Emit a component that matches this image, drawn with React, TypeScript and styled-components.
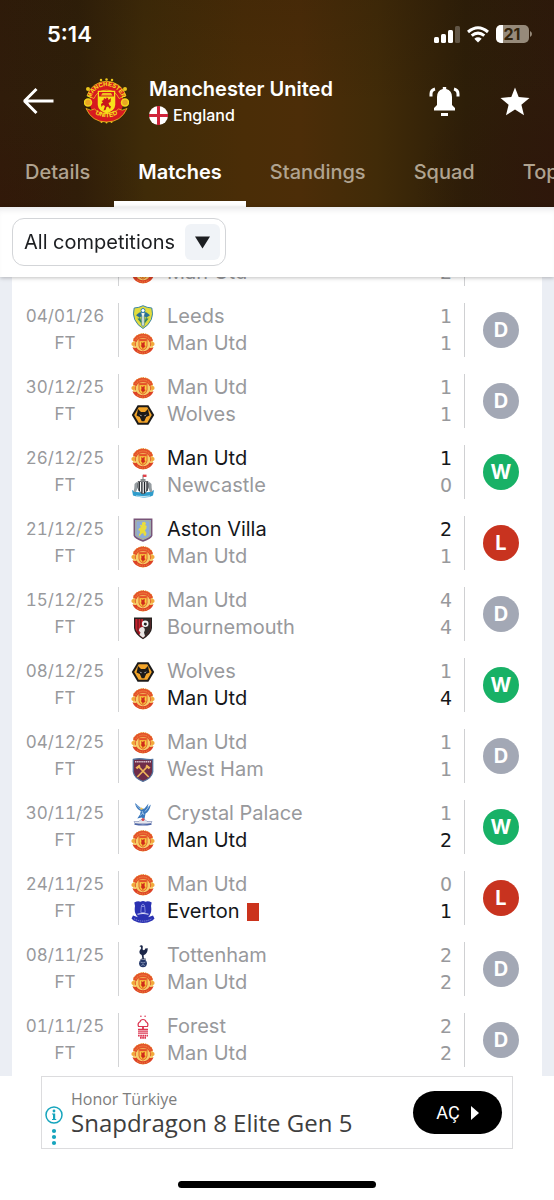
import React from "react";
import styled, { createGlobalStyle } from "styled-components";

const GlobalStyle = createGlobalStyle`
  *, *::before, *::after { box-sizing: border-box; }
  body { margin: 0; background: #fff; font-family: Inter, "Liberation Sans", sans-serif; }
  button, select { font-family: inherit; }
  h1, p, ul { margin: 0; padding: 0; }
  ul { list-style: none; }
`;

/* ---------- layout ---------- */

const Screen = styled.div`
  display: flex;
  flex-direction: column;
  height: 100vh;
  overflow: hidden;
`;

const Header = styled.header`
  flex: none;
  color: #fff;
  background:
    radial-gradient(ellipse 150px 110px at 0% 100%, rgba(52, 20, 8, 0.4), transparent),
    radial-gradient(ellipse 140px 110px at 100% 90%, rgba(46, 20, 10, 0.5), transparent),
    linear-gradient(180deg, rgba(36, 20, 8, 0.15), transparent 50%),
    linear-gradient(90deg, #301c0a 0%, #2f1f09 14%, #3f2b08 26%, #4a2d07 44%, #4c2d08 54%, #412b08 68%, #2d1e08 84%, #2e1a0b 100%);
`;

const StatusBar = styled.div`
  display: flex;
  align-items: center;
  justify-content: space-between;
  height: 68px;
  padding: 0 22px 0 47px;
`;

const Clock = styled.span`
  font-size: 22px;
  line-height: 28px;
  font-weight: 600;
`;

const StatusIcons = styled.div`
  display: flex;
  align-items: center;
  gap: 7px;
`;

const TitleRow = styled.div`
  display: flex;
  align-items: center;
  height: 68px;
  padding: 0 24px 2px 22px;
`;

const IconButton = styled.button`
  display: flex;
  padding: 0;
  border: 0;
  background: none;
  color: inherit;
  cursor: pointer;
`;

const ClubCrest = styled.div`
  display: flex;
  margin: 0 20px 0 29px;
`;

const ClubText = styled.div`
  flex: 1;
  min-width: 0;
`;

const ClubName = styled.h1`
  font-size: 20px;
  line-height: 28px;
  font-weight: 600;
  white-space: nowrap;
`;

const Country = styled.p`
  display: flex;
  align-items: center;
  gap: 5px;
  font-size: 16px;
  line-height: 24px;
  font-weight: 500;
`;

const Actions = styled.div`
  display: flex;
  align-items: center;
  gap: 40px;
`;

const Tabs = styled.nav`
  display: flex;
  height: 71px;
  padding-left: 1px;
  overflow: hidden;
`;

const Tab = styled.a<{ $active?: boolean }>`
  flex: none;
  display: flex;
  align-items: center;
  padding: 6px 24px 0;
  border-bottom: 6px solid ${(p) => (p.$active ? "#fff" : "transparent")};
  color: ${(p) => (p.$active ? "#fff" : "#b0a390")};
  font-size: 20px;
  line-height: 24px;
  font-weight: ${(p) => (p.$active ? 600 : 500)};
  text-decoration: none;
`;

const FilterBar = styled.div`
  position: relative;
  z-index: 1;
  flex: none;
  display: flex;
  align-items: center;
  height: 70px;
  padding: 0 12px;
  background: #fff;
  box-shadow: 0 1px 4px rgba(0, 0, 0, 0.25), inset 0 6px 6px -4px rgba(40, 40, 60, 0.12);
`;

const SelectBox = styled.div`
  display: grid;
  align-items: center;
  width: 214px;
  height: 48px;
  border: 1px solid #d3d5d8;
  border-radius: 12px;

  > * { grid-area: 1 / 1; }
`;

const Select = styled.select`
  appearance: none;
  width: 100%;
  height: 100%;
  padding: 0 44px 0 11px;
  border: 0;
  border-radius: 10px;
  background: transparent;
  color: #1c1e21;
  font-size: 20px;
  cursor: pointer;
`;

const SelectArrow = styled.span`
  justify-self: end;
  display: flex;
  align-items: center;
  justify-content: center;
  width: 35px;
  height: 36px;
  margin-right: 5px;
  border-radius: 6px;
  background: #f0f3f7;
  pointer-events: none;
`;

const Scroller = styled.main`
  flex: 1;
  min-height: 0;
  display: flex;
  flex-direction: column-reverse;
  overflow-y: auto;
  scrollbar-width: none;
  padding: 0 12px;
  background: #ebeef4;
`;

const MatchList = styled.ul`
  background: #fff;
`;

const Match = styled.li`
  display: flex;
  height: 71px;
  padding: 8px 0 9px;
`;

const When = styled.div`
  flex: none;
  width: 107px;
  border-right: 1px solid #d3d4d6;
  color: #98999c;
  font-size: 17px;
  line-height: 27px;
  text-align: center;
  font-variant-numeric: tabular-nums;
`;

const Teams = styled.div`
  flex: 1;
  min-width: 0;
  display: flex;
  flex-direction: column;
  justify-content: flex-end;
  padding: 0 12px;
  border-right: 1px solid #cfd0d2;
`;

const TeamLine = styled.div<{ $winner?: boolean }>`
  display: flex;
  align-items: center;
  height: 27px;
  color: ${(p) => (p.$winner ? "#15171a" : "#98999c")};
  font-size: 20px;
  line-height: 27px;
  white-space: nowrap;
`;

const TeamName = styled.span`
  margin-left: 12px;
`;

const RedCard = styled.span`
  width: 12px;
  height: 18px;
  margin-left: 7px;
  background: #cb331c;
`;

const Score = styled.span`
  margin-left: auto;
  font-family: "DejaVu Sans", sans-serif;
  font-size: 19px;
`;

const Outcome = styled.div`
  flex: none;
  display: flex;
  align-items: center;
  width: 77px;
  padding-left: 18px;
`;

const outcomeColor = { D: "#a3a8b5", W: "#18b166", L: "#c8331f" };

const Badge = styled.span<{ $kind: "D" | "W" | "L" }>`
  display: flex;
  align-items: center;
  justify-content: center;
  width: 36px;
  height: 36px;
  border-radius: 50%;
  background: ${(p) => outcomeColor[p.$kind]};
  color: #fff;
  font-size: 20px;
  line-height: 24px;
  font-weight: 700;
`;

const Footer = styled.footer`
  flex: none;
  display: flex;
  flex-direction: column;
  align-items: center;
  gap: 32px;
  padding: 0 41px 12px;
  background: #fff;
`;

const Ad = styled.aside`
  display: flex;
  align-items: center;
  width: 100%;
  height: 73px;
  padding: 0 10px 0 3px;
  border: 1px solid #dcdcde;
  font-family: "Open Sans", "Noto Sans", sans-serif;
`;

const AdMarks = styled.div`
  display: flex;
  margin-top: 26px;
`;

const AdText = styled.div`
  flex: 1;
  min-width: 0;
  padding: 0 0 4px 8px;
  line-height: 24px;
  white-space: nowrap;
`;

const Advertiser = styled.p`
  color: #7d7d7d;
  font-size: 16px;
`;

const AdTitle = styled.p`
  color: #3e3e3e;
  font-size: 24px;
`;

const AdButton = styled.button`
  display: flex;
  align-items: center;
  justify-content: center;
  gap: 11px;
  width: 89px;
  height: 43px;
  border: 0;
  border-radius: 22px;
  background: #000;
  color: #fff;
  font-family: Roboto, sans-serif;
  font-size: 18px;
  cursor: pointer;
`;

const HomeIndicator = styled.div`
  width: 198px;
  height: 7px;
  border-radius: 4px;
  background: #000;
`;

/* ---------- crests ---------- */

type Club =
  | "united" | "leeds" | "wolves" | "newcastle" | "villa" | "bournemouth"
  | "westham" | "palace" | "everton" | "spurs" | "forest";

const UnitedLarge = () => (
  <svg width="45" height="46" viewBox="0 0 90 92" role="img" aria-label="Manchester United crest">
    <defs>
      <path id="arcTop" d="M15 37A32 32 0 0 1 75 37" />
      <path id="arcBottom" d="M12 61A37 32 0 0 0 78 61" />
    </defs>
    <g fill="#e9c41c">
      <circle cx="34" cy="4" r="2.500" /><circle cx="45" cy="3" r="2.500" /><circle cx="56" cy="4" r="2.500" />
      <circle cx="8" cy="22" r="4" /><circle cx="82" cy="22" r="4" />
      <circle cx="35" cy="88" r="2" /><circle cx="45" cy="89" r="2" /><circle cx="55" cy="88" r="2" />
    </g>
    <ellipse cx="45" cy="48" rx="34" ry="32" fill="#d71a20" />
    <path d="M6 35A41 41 0 0 1 84 35L70 41A27 27 0 0 0 20 41Z" fill="#d71a20" stroke="#f0cf1e" strokeWidth="1.500" />
    <path d="M4 61Q14 67 21 62Q29 71 45 71T69 62Q76 67 86 61Q74 88 45 88T4 61Z" fill="#d71a20" stroke="#f0cf1e" strokeWidth="1.500" />
    <circle cx="8" cy="49" r="7" fill="#e9a623" stroke="#f4d51c" strokeWidth="3" />
    <circle cx="82" cy="49" r="7" fill="#e9a623" stroke="#f4d51c" strokeWidth="3" />
    <path d="M29 27H61V54Q60 65 45 69Q30 65 29 54Z" fill="#f7e21b" stroke="#f7e21b" strokeWidth="3" />
    <path d="M30 28H60V37H30Z" fill="#d71a20" />
    <path d="M34 35L37 30H54L57 35Z" fill="#f0c020" />
    <path d="M40 40l4 2 1-3 3 1 1 4 5-4-1 8-4 2 2 5 3 2-2 5-4-5-3 1-2 6-4 1 3-9-4-2-3 4-1-6 4-3-3-3 4-2Z" fill="#c9151b" />
    <text fontSize="12" fontWeight="700" fill="#f7e21b" fontFamily="Liberation Sans, sans-serif">
      <textPath href="#arcTop" startOffset="50%" textAnchor="middle">MANCHESTER</textPath>
    </text>
    <text fontSize="13" fontWeight="700" fill="#f7e21b" fontFamily="Liberation Sans, sans-serif">
      <textPath href="#arcBottom" startOffset="50%" textAnchor="middle">UNITED</textPath>
    </text>
  </svg>
);

const crests: Record<Club, React.ReactNode> = {
  united: (
    <>
      <circle cx="12" cy="12" r="10.400" fill="#f6cf6a" />
      <path d="M2.800 7.500A10.300 10.300 0 0 1 21.200 7.500" fill="none" stroke="#eba24a" strokeWidth="1.600" strokeDasharray="1.200 1" />
      <path d="M2 8.600A10.700 10.700 0 0 1 22 8.600L18.600 10.200A7.300 7.300 0 0 0 5.400 10.200Z" fill="#e4522a" />
      <path d="M5 7.600A8.600 8.600 0 0 1 19 7.600" fill="none" stroke="#f3a54a" strokeWidth=".9" strokeDasharray="1 .9" />
      <path d="M1.400 15.300Q4 16.500 5.600 15.400A7.300 7.300 0 0 0 18.400 15.400Q20 16.500 22.600 15.300A11.200 10.200 0 0 1 1.400 15.300Z" fill="#dd4226" />
      <path d="M6 18.800Q12 23.300 18 18.800" fill="none" stroke="#f3a54a" strokeWidth=".9" strokeDasharray="1 .9" />
      <circle cx="2.300" cy="12" r="1.900" fill="#f2a93a" /><circle cx="21.700" cy="12" r="1.900" fill="#f2a93a" />
      <path d="M4.400 10.200V14.200M19.600 10.200V14.200" stroke="#e4622e" strokeWidth="1" />
      <path d="M8 7.200H16V14Q15.600 17 12 18.200Q8.400 17 8 14Z" fill="#fbd040" stroke="#e4622e" strokeWidth="1" />
      <path d="M8.300 7.200H15.700V9.200H8.300Z" fill="#e4522a" />
      <path d="M10.400 10.400l1.200.6 2-.9-.2 2.700.8 1.800-1.400 1-1 1.200-.7-1.600-1.100-.9.600-1.800Z" fill="#cf2a1c" stroke="#d6401f" strokeWidth=".5" />
    </>
  ),
  leeds: (
    <>
      <path d="M12 .7Q16 2.800 20.800 3Q22.500 9 20.300 14.500Q17.500 20.500 12 23.500Q6.500 20.500 3.700 14.500Q1.500 9 3.200 3Q8 2.800 12 .7Z" fill="#e3dc3c" stroke="#3a86a8" strokeWidth="1" />
      <path d="M5.300 9Q12 3 18.700 9L17.500 14.500Q16 18 12 20.500Q8 18 6.500 14.500Z" fill="#cfd644" />
      <path d="M5 10.200Q12 3.500 19 10.200L15.500 12.500Q12 10 8.500 12.500Z" fill="#2a6f96" />
      <path d="M9.800 8Q12 6.600 14.200 8L13.200 11V20.500L12 21.300L10.800 20.500V11Z" fill="#f6f6ea" stroke="#2a6f96" strokeWidth=".7" />
      <circle cx="12" cy="5.500" r="2" fill="#fff" stroke="#2f7fae" strokeWidth="1" />
      <path d="M7 13.500l2.500 3M8.500 12.500l1.500 5M17 13.500l-2.500 3M15.500 12.500L14 17.500" stroke="#2f7f6a" strokeWidth="1.100" />
    </>
  ),
  wolves: (
    <>
      <path d="M6.600 2.200H17.400L23.200 12L17.400 21.800H6.600L.8 12Z" fill="#1c1a19" />
      <path d="M7.700 4.300H16.300L20.800 12L16.300 19.700H7.700L3.200 12Z" fill="#f3a52a" />
      <path d="M7 6L10 9H14L17 6L17.800 10L18.500 12.500L15.200 14L13.300 18.200H10.700L8.800 14L5.500 12.500L6.200 10Z" fill="#1c1a19" />
      <path d="M8.200 11.300l2.600 1.500-.6.500ZM15.800 11.300l-2.600 1.500.6.500Z" fill="#fff" />
    </>
  ),
  newcastle: (
    <>
      <path d="M1 16Q4 18.500 12 18.500T23 16L22 21.500Q18 24 12 23.500T2 21.500Z" fill="#2f9ccb" />
      <path d="M5 22Q12 23.200 19 22" stroke="#d9eef7" strokeWidth=".9" fill="none" />
      <path d="M3.500 10l2-2 1.500 1.500L7 13l-2 5H2.500l.8-4ZM20.500 10l-2-2L17 9.500l0 3.500 2 5h2.500l-.8-4Z" fill="#969da1" />
      <path d="M7 7.500H17V14Q16 18.500 12 20Q8 18.500 7 14Z" fill="#f8f8f8" stroke="#30343a" strokeWidth=".7" />
      <path d="M8.300 8V17M10.900 8V19.500M13.500 8V19.500M16 8V17" stroke="#1f2328" strokeWidth="1.300" />
      <path d="M9.500 7.500V5H14.500V7.500Z" fill="#8b8f90" />
      <path d="M12 5.500V.8" stroke="#555" strokeWidth=".8" /><path d="M12 .6H15.500V3H12Z" fill="#e0414a" />
    </>
  ),
  villa: (
    <>
      <path d="M3.300 1.300H20.700V17.500Q20 20 12 23Q4 20 3.300 17.500Z" fill="#8dabd9" stroke="#785478" strokeWidth="1.500" />
      <path d="M5 2.800H19V17Q18 19 12 21.200Q6 19 5 17Z" fill="none" stroke="#c9b552" strokeWidth=".6" />
      <path d="M11 4.500l2.500-.8 1.600 1.500-1 1.800 1.600 1-.4 2.700-1.400 1.500 1.600 3-.6 2.500-2-.3-.6-2.500-2.200 1-1.200 2.300-1.300-1 1.500-2.800-.6-2.200-1.200.3.500-1.700 2.200-1.700-1.300-1.500 1.300-1.200 1 1Z" fill="#e9dc3c" />
    </>
  ),
  bournemouth: (
    <>
      <path d="M3 1.500H21V12Q20.500 18 12 23.300Q3.500 18 3 12Z" fill="#26211f" />
      <path d="M4.300 3H19.700V12Q19 17 12 21.700Q4.800 17 4.300 12Z" fill="#c5212d" />
      <path d="M12 3H19.700V12Q19 17 12 21.700Z" fill="#312a29" />
      <path d="M7 3V18M9.800 3V20" stroke="#4a1518" strokeWidth=".9" />
      <path d="M8.500 12.500Q9.500 10.500 12 11Q13.800 11.500 13.900 14L13 16.500L14 20L12 21.700L8.500 19L9.500 16.500L7.800 14.500Z" fill="#e9e6e4" />
      <circle cx="14.200" cy="7.800" r="3.300" fill="#f4f4f4" />
      <path d="M13.200 6.800h2.200l.5 1.700-1.500 1.200-1.700-1.200Z" fill="#222" />
    </>
  ),
  westham: (
    <>
      <path d="M2.300 1.500Q7 .300 12 1T21.700 1.500V14Q20.500 20.500 12 23.300Q3.500 20.500 2.300 14Z" fill="#6f2c48" stroke="#53729c" strokeWidth="1.300" />
      <path d="M4 3.800H20" stroke="#d8c3d0" strokeWidth="1.400" strokeDasharray="1.500 .6" />
      <path d="M6.300 19L17 8M17.700 19L7 8" stroke="#efb65b" strokeWidth="1.700" />
      <path d="M4.500 9.500L8.500 6.500L9.500 8.500L6.200 11.200ZM19.500 9.500L15.500 6.500L14.500 8.500L17.800 11.200Z" fill="#efb65b" />
    </>
  ),
  palace: (
    <>
      <path d="M4 1Q5 7 9.800 9L9 12.500L6.300 16.500L10.500 15.500L13.500 17L14.500 11.500Q18.500 9.500 19.800 2.500L16.500 5.500L17.500 1.500L13.500 6.500L11 7Z" fill="#3a78bd" />
      <path d="M5.500 3l4.200 4.500M18 4.500L14 9.500M9 13.500l3-2.500M11 9l2 4" stroke="#b7d2ee" strokeWidth=".8" />
      <path d="M8.500 6.500l2-1 1.500 1-1 1.500Z" fill="#e8c45c" />
      <path d="M3 19.500H8L10 17.500H14L16 19.500H21L20 21.500H4Z" fill="#e4e5ec" stroke="#7b88b6" strokeWidth=".6" />
      <circle cx="12" cy="17.500" r="1.500" fill="#d74a50" />
      <path d="M3.500 22Q12 23.800 20.500 22" stroke="#4c64a6" strokeWidth="1.400" fill="none" />
    </>
  ),
  everton: (
    <>
      <path d="M3.300 2.500Q7 .5 9.500 1.800Q12 0 14.500 1.800Q17 .5 20.700 2.500L20 6Q20.800 11 19.500 13.500Q18.500 16 17 17.200L22 15.500L23.500 18.500L21.500 20.500Q12 25.500 2.500 20.500L.5 18.500L2 15.500L7 17.200Q5.500 16 4.500 13.500Q3.200 11 4 6Z" fill="#2a31b2" />
      <path d="M10.300 6.500H13.700L14.200 12.500H9.800ZM10.700 6.500V5L12 4 13.300 5V6.500" fill="none" stroke="#a8aced" strokeWidth=".7" />
      <path d="M6.500 14.300Q12 12.800 17.500 14.300" stroke="#e4e5fa" strokeWidth="1.100" fill="none" />
      <path d="M3 18.700Q12 23.500 21 18.700" stroke="#8f94de" strokeWidth=".9" strokeDasharray="1.300 .8" fill="none" />
    </>
  ),
  spurs: (
    <>
      <path d="M10 1.200Q11.500 1 11.800 2.500L11.600 5.500Q13.500 7.500 14.300 4.500L16.800 4.200Q16.700 9.500 12.600 11.200L12.900 15H11.500L10.700 11Q8 9.800 8.500 7L10.200 4.200L9.700 2.800L8.300 2.300Z" fill="#1b2648" />
      <path d="M9.500 15.500l2.500-.8 3 .5" stroke="#1b2648" strokeWidth=".8" fill="none" />
      <circle cx="12" cy="19.300" r="3.900" fill="#25386a" />
      <path d="M9.500 18Q12 20 14.500 18M10.300 21.500Q12 19.500 13.700 21.500" stroke="#a9b6d2" strokeWidth=".7" fill="none" />
    </>
  ),
  forest: (
    <>
      <circle cx="9.900" cy="1.200" r=".8" fill="#dc3450" /><circle cx="14.100" cy="1.200" r=".8" fill="#dc3450" />
      <path d="M12 4.500Q14.500 4.500 15 6.800Q17.800 8.500 16.500 11.500H7.500Q6.200 8.500 9 6.800Q9.500 4.500 12 4.500Z" fill="#fff" stroke="#dc3450" strokeWidth="1.200" />
      <path d="M12 11V14" stroke="#dc3450" strokeWidth="1.800" />
      <path d="M7 14.300H17M7 16.200H17M7 18.100H17" stroke="#dc3450" strokeWidth="1.200" />
      <path d="M7 20.600H17M9 22.700H15" stroke="#dc3450" strokeWidth="1.900" strokeDasharray="1.700 .5" />
    </>
  ),
};

const Crest = ({ club }: { club: Club }) => (
  <svg width="24" height="24" viewBox="0 0 24 24" aria-hidden="true">{crests[club]}</svg>
);

/* ---------- data ---------- */

interface Side { club: Club; name: string; score: number; winner?: boolean; redCard?: boolean }
interface Fixture { date?: string; sides: Side[]; outcome?: "D" | "W" | "L" }

const side = (club: Club, name: string, score: number, winner = false, redCard = false): Side =>
  ({ club, name, score, winner, redCard });
const utd = (score: number, winner = false) => side("united", "Man Utd", score, winner);

const fixtures: Fixture[] = [
  { sides: [utd(2)] },
  { date: "04/01/26", sides: [side("leeds", "Leeds", 1), utd(1)], outcome: "D" },
  { date: "30/12/25", sides: [utd(1), side("wolves", "Wolves", 1)], outcome: "D" },
  { date: "26/12/25", sides: [utd(1, true), side("newcastle", "Newcastle", 0)], outcome: "W" },
  { date: "21/12/25", sides: [side("villa", "Aston Villa", 2, true), utd(1)], outcome: "L" },
  { date: "15/12/25", sides: [utd(4), side("bournemouth", "Bournemouth", 4)], outcome: "D" },
  { date: "08/12/25", sides: [side("wolves", "Wolves", 1), utd(4, true)], outcome: "W" },
  { date: "04/12/25", sides: [utd(1), side("westham", "West Ham", 1)], outcome: "D" },
  { date: "30/11/25", sides: [side("palace", "Crystal Palace", 1), utd(2, true)], outcome: "W" },
  { date: "24/11/25", sides: [utd(0), side("everton", "Everton", 1, true, true)], outcome: "L" },
  { date: "08/11/25", sides: [side("spurs", "Tottenham", 2), utd(2)], outcome: "D" },
  { date: "01/11/25", sides: [side("forest", "Forest", 2), utd(2)], outcome: "D" },
];

const MatchRow = ({ date, sides, outcome }: Fixture) => (
  <Match>
    <When>{date && <><div>{date}</div><div>FT</div></>}</When>
    <Teams>
      {sides.map((s) => (
        <TeamLine key={s.club} $winner={s.winner}>
          <Crest club={s.club} />
          <TeamName>{s.name}</TeamName>
          {s.redCard && <RedCard role="img" aria-label="Red card" />}
          <Score>{s.score}</Score>
        </TeamLine>
      ))}
    </Teams>
    <Outcome>{outcome && <Badge $kind={outcome}>{outcome}</Badge>}</Outcome>
  </Match>
);

export default function App() {
  return (
    <Screen>
      <GlobalStyle />
      <Header>
        <StatusBar>
          <Clock>5:14</Clock>
          <StatusIcons>
            <svg width="26" height="17" viewBox="0 0 26 17" fill="#fff" aria-hidden="true">
              <rect x="0" y="11" width="5" height="6" rx="1.500" />
              <rect x="7" y="8" width="5" height="9" rx="1.500" />
              <rect x="14" y="4" width="5" height="13" rx="1.500" />
              <rect x="21" y="0" width="5" height="17" rx="1.500" opacity=".25" />
            </svg>
            <svg width="22" height="17" viewBox="0 0 22 17" fill="none" stroke="#fff" strokeWidth="3" aria-hidden="true">
              <path d="M1 6Q11-2.500 21 6M4.700 9.700Q11 4.500 17.300 9.700" />
              <path d="M11 16.500L7.300 12.700Q11 9.800 14.700 12.700Z" fill="#fff" stroke="none" />
            </svg>
            <svg width="36" height="18" viewBox="0 0 36 18" role="img" aria-label="Battery 21 percent">
              <rect width="33" height="18" rx="5" fill="#968a7a" />
              <path d="M5 0H7V18H5A5 5 0 0 1 0 13V5A5 5 0 0 1 5 0Z" fill="#fff" />
              <path d="M34 6Q36 7 36 9T34 12Z" fill="#968a7a" />
              <text x="16" y="15" textAnchor="middle" fontSize="16" fontWeight="700" fontFamily="Inter, sans-serif" fill="#33240c">21</text>
            </svg>
          </StatusIcons>
        </StatusBar>
        <TitleRow>
          <IconButton aria-label="Back">
            <svg width="33" height="28" viewBox="0 0 33 28" fill="none" stroke="#fff" strokeWidth="3">
              <path d="M14.500 2L2.500 14L14.500 26M3 14H31.500" strokeLinejoin="bevel" />
            </svg>
          </IconButton>
          <ClubCrest><UnitedLarge /></ClubCrest>
          <ClubText>
            <ClubName>Manchester United</ClubName>
            <Country>
              <svg width="19" height="19" viewBox="0 0 19 19" aria-hidden="true">
                <circle cx="9.500" cy="9.500" r="9.500" fill="#fff" />
                <path d="M9.500 0V19M0 9.500H19" stroke="#d0253c" strokeWidth="3" />
              </svg>
              England
            </Country>
          </ClubText>
          <Actions>
            <IconButton aria-label="Notifications">
              <svg width="31" height="31" viewBox="0 0 31 31" fill="#fff">
                <path d="M13.800 1H17.200V3Q23 4.500 23 11V19L26 22V24.500H5V22L8 19V11Q8 4.500 13.800 3Z" />
                <path d="M12 27H19V30H12Z" />
                <path d="M2 10.500V8Q2 4 6 3M29 10.500V8Q29 4 25 3" fill="none" stroke="#fff" strokeWidth="3" />
              </svg>
            </IconButton>
            <IconButton aria-label="Favourite">
              <svg width="30" height="29" viewBox="0 0 30 29" fill="#fff">
                <path d="M15 .5L18.700 10L29.500 11L21.400 17.800L24 28.200L15 22.600L6 28.200L8.600 17.800L.5 11L11.300 10Z" />
              </svg>
            </IconButton>
          </Actions>
        </TitleRow>
        <Tabs>
          <Tab href="#details">Details</Tab>
          <Tab href="#matches" $active aria-current="page">Matches</Tab>
          <Tab href="#standings">Standings</Tab>
          <Tab href="#squad">Squad</Tab>
          <Tab href="#top">Top</Tab>
        </Tabs>
      </Header>

      <FilterBar>
        <SelectBox>
          <Select aria-label="Competition">
            <option>All competitions</option>
          </Select>
          <SelectArrow>
            <svg width="15" height="13" viewBox="0 0 15 13" aria-hidden="true">
              <path d="M0 .5H15L7.500 12.500Z" fill="#1c1e21" />
            </svg>
          </SelectArrow>
        </SelectBox>
      </FilterBar>

      <Scroller>
        <MatchList>
          {fixtures.map((f, i) => <MatchRow key={i} {...f} />)}
        </MatchList>
      </Scroller>

      <Footer>
        <Ad>
          <AdMarks>
            <svg width="18" height="40" viewBox="0 0 18 40" fill="#16a5bd" role="img" aria-label="Ad information">
              <circle cx="9" cy="9" r="8" fill="none" stroke="#16a5bd" strokeWidth="1.500" />
              <circle cx="9" cy="5" r="1.400" />
              <path d="M7 7.500H10.200V13H11.200V14H7V13H8V8.500H7Z" />
              <circle cx="9" cy="25" r="2.100" /><circle cx="9" cy="31" r="2.100" /><circle cx="9" cy="37" r="2.100" />
            </svg>
          </AdMarks>
          <AdText>
            <Advertiser>Honor Türkiye</Advertiser>
            <AdTitle>Snapdragon 8 Elite Gen 5</AdTitle>
          </AdText>
          <AdButton>
            AÇ
            <svg width="8" height="14" viewBox="0 0 8 14" aria-hidden="true"><path d="M0 0L8 7L0 14Z" fill="#fff" /></svg>
          </AdButton>
        </Ad>
        <HomeIndicator />
      </Footer>
    </Screen>
  );
}
